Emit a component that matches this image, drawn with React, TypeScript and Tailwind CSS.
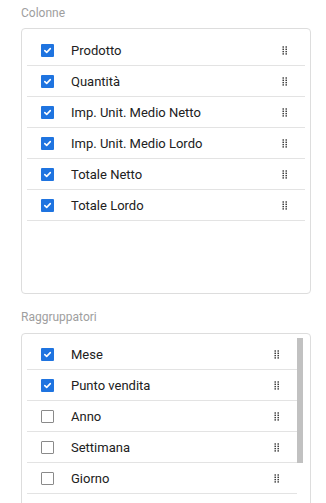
import React from "react"

type Item = {
    label: string
    checked: boolean
}

const colonne: Item[] = [
    { label: "Prodotto", checked: true },
    { label: "Quantità", checked: true },
    { label: "Imp. Unit. Medio Netto", checked: true },
    { label: "Imp. Unit. Medio Lordo", checked: true },
    { label: "Totale Netto", checked: true },
    { label: "Totale Lordo", checked: true },
]

const raggruppatori: Item[] = [
    { label: "Mese", checked: true },
    { label: "Punto vendita", checked: true },
    { label: "Anno", checked: false },
    { label: "Settimana", checked: false },
    { label: "Giorno", checked: false },
    { label: "Categoria", checked: false },
]

function Checkbox({ checked }: { checked: boolean }) {
    if (!checked) {
        return <span className="w-[13px] h-[13px] shrink-0 border border-[#8a8a8a] rounded-[1px] bg-white" />
    }
    return <span className="w-[13px] h-[13px] shrink-0 rounded-[1px] bg-[#1f74e0] flex items-center justify-center">
        <svg width="9" height="9" viewBox="0 0 9 9">
            <path d="M1.8 4.6 L3.7 6.4 L7.3 2.6" fill="none" stroke="white" strokeWidth="1.6" strokeLinecap="round" strokeLinejoin="round" />
        </svg>
    </span>
}

function DragHandle() {
    return <svg width="6" height="9" viewBox="0 0 6 9" className="shrink-0">
        {[1, 3.3, 5.6, 7.9].map(y =>
            [1.2, 4.2].map(x => <rect key={`${x}-${y}`} x={x - 0.7} y={y - 0.7} width="1.4" height="1.4" fill="#2a2a2a" />)
        )}
    </svg>
}

function Row({ item }: { item: Item }) {
    return <div className="h-[31px] flex items-center border-b border-[#e3e3e3] pl-[14px] pr-[17px]">
        <Checkbox checked={item.checked} />
        <span className="ml-[17px] text-[13px] text-[#212121] leading-none">{item.label}</span>
        <span className="ml-auto"><DragHandle /></span>
    </div>
}

export default function App() {
    return <div className="w-[326px] h-[503px] overflow-hidden bg-white pl-[21px] pt-[5px]" style={{ fontFamily: "Roboto, 'Liberation Sans', sans-serif" }}>

        <p className="text-[12px] leading-[16px] text-[#9e9e9e] mb-[7px]">Colonne</p>

        <div className="w-[290px] h-[266px] border border-[#dddddd] rounded-[4px] pt-[6px] px-[5px]">
            {colonne.map(item => <Row key={item.label} item={item} />)}
        </div>

        <p className="text-[12px] leading-[16px] text-[#9e9e9e] mt-[15px] mb-[8px]">Raggruppatori</p>

        <div className="w-[290px] h-[266px] border border-[#dddddd] rounded-[4px] flex overflow-hidden">
            <div className="flex-1 pt-[5px] pl-[5px]">
                {raggruppatori.map(item => <Row key={item.label} item={item} />)}
            </div>
            <div className="w-[6px] mr-[7px] pt-[4px]">
                <div className="h-[125px] bg-[#c1c1c1]" />
            </div>
        </div>

    </div>
}
